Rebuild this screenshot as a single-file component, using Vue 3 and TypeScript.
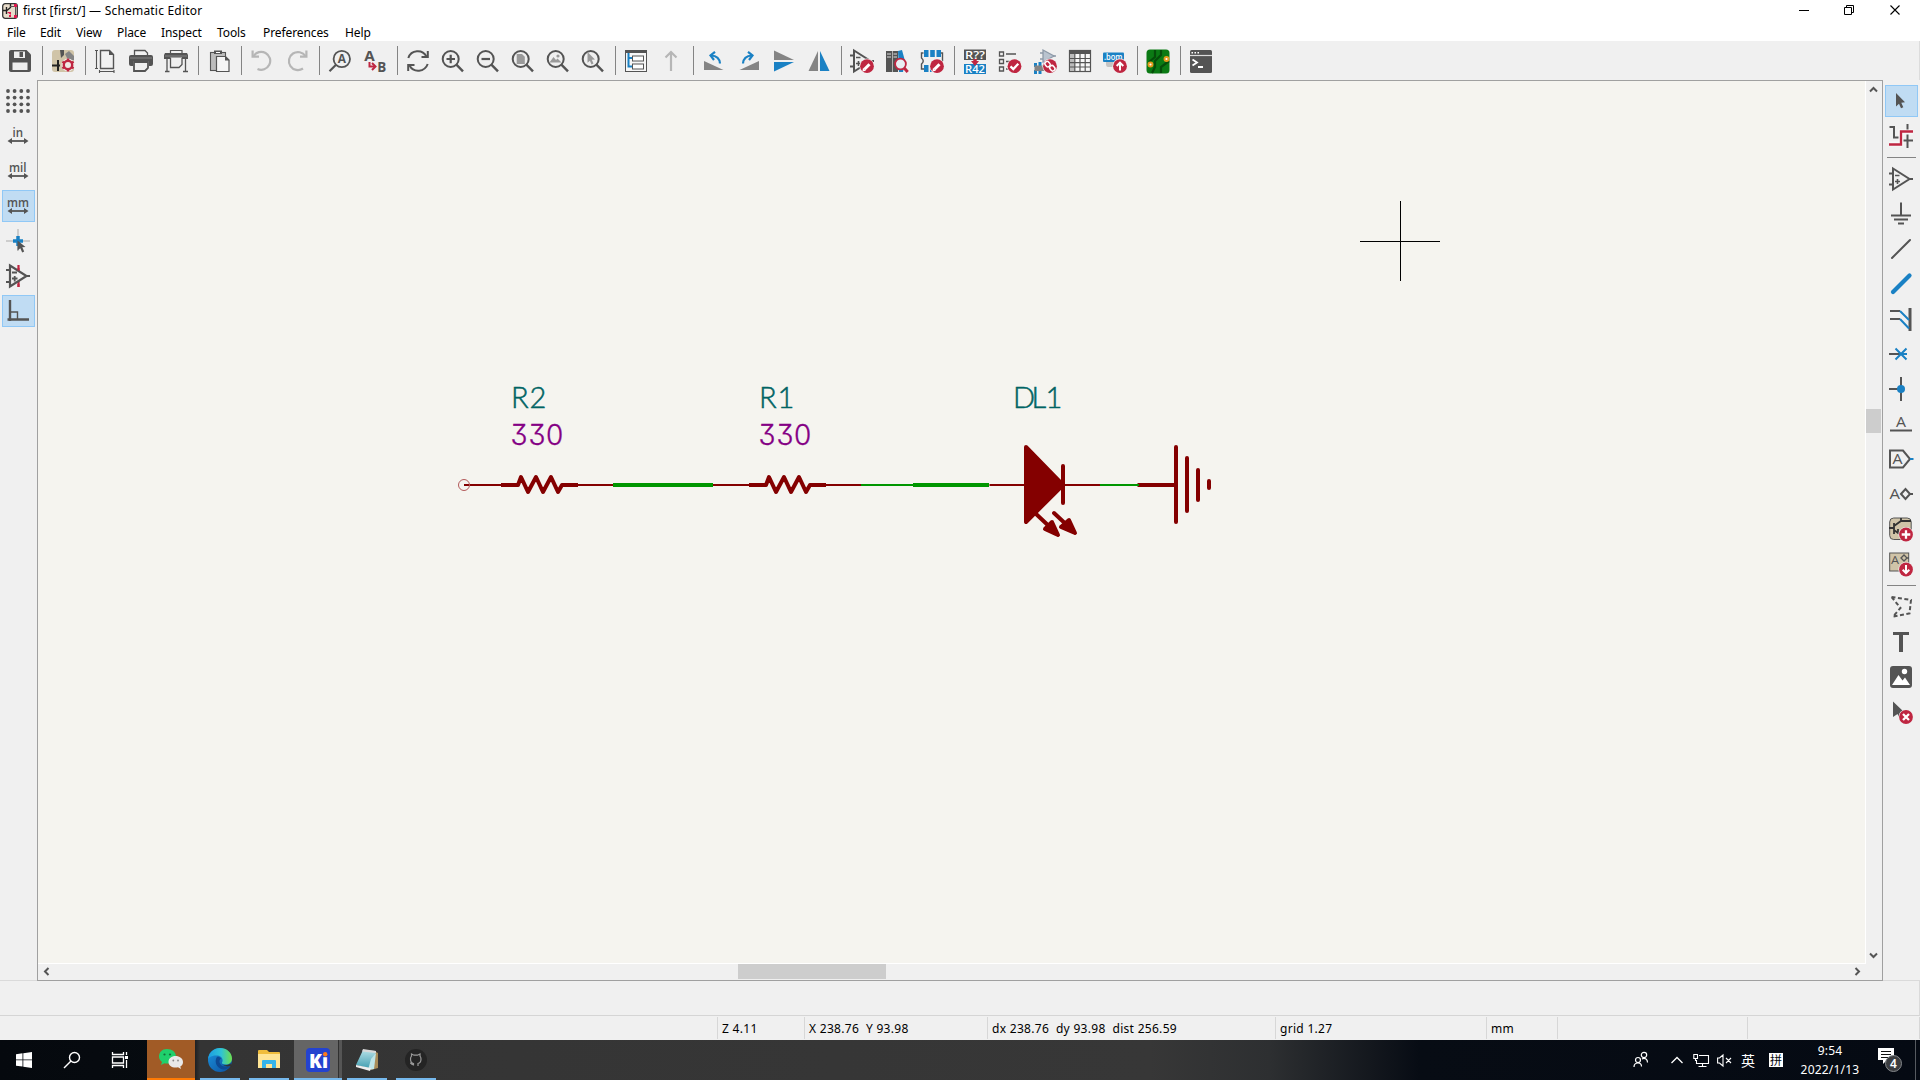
<script setup lang="ts">
interface Tool {
  icon: string
  active?: boolean
}
type Item = Tool | null

const D = '#545454'
const B = '#1a81c4'
const R = '#bf2641'
const G = '#848484'
const L = '#b6b6b6'
const T = '#d0c4a8'

const stroke = (d: string, color = D, w = 2, extra = '') =>
  `<path d="${d}" fill="none" stroke="${color}" stroke-width="${w}" ${extra}/>`
const fill = (d: string, color = D) => `<path d="${d}" fill="${color}"/>`
const label = (t: string, x: number, y: number, size: number, color = D, weight = 700, len = 0) =>
  `<text x="${x}" y="${y}" font-family="'Open Sans','Noto Sans',sans-serif" font-size="${size}" font-weight="${weight}" fill="${color}"${len ? ` textLength="${len}" lengthAdjust="spacingAndGlyphs"` : ''}>${t}</text>`
const badge = (cx: number, cy: number, inner: string) =>
  `<circle cx="${cx}" cy="${cy}" r="7.600" fill="#f0f0f0"/><circle cx="${cx}" cy="${cy}" r="6.900" fill="${R}"/>${inner}`

const lens = `<circle cx="9.700" cy="10" r="8" fill="none" stroke="${D}" stroke-width="2"/>` + stroke('M15.4 15.7L22 22.3', D, 2.4)
const pen = stroke('M14.500 20.300L19.500 15.300', '#fff', 3) + fill('M12.400 22.400L13 18.800L16 21.800Z', '#fff')
const opamp = stroke('M4 1.5V22.5L20.5 12Z', D, 2) + stroke('M0 6.5H4M0 17.500H4M20 12H24', D, 2) + stroke('M6 8.500H10.500M6 14.500H11M8.500 12V17', D, 1.6)
const measure = stroke('M4 17H20', D, 1.8) + fill('M1.500 17L6 14V20ZM22.500 17L18 14V20Z')

const icons: Record<string, string> = {
  save: fill('M1 3Q1 1 3 1H18.500L23 5.500V21Q23 23 21 23H3Q1 23 1 21Z') + fill('M6 2.500H17V9H6ZM4.500 13.500H19.500V21H4.500Z', '#f0f0f0') + fill('M11 3H15V8H11Z') + fill('M11.500 3H12V8H11.500Z', '#f0f0f0'),
  setup: `<rect x="1" y="1" width="22" height="22" rx="3" fill="${T}"/>` + fill('M9 1H13V6L10 9Z', '#545454') + fill('M14 5L18 2L23 7V11H17Z', G) + stroke('M1 16.500H9M7 11V22', '#222', 2) + `<circle cx="17" cy="16" r="6.500" fill="#efe9e4"/>` + `<circle cx="17" cy="16" r="4.200" fill="none" stroke="${R}" stroke-width="2.400"/>` + stroke('M17 9.500V12M17 20V22.500M11.400 12.800L13.500 14M20.500 18L22.600 19.200M22.600 12.800L20.500 14M13.500 18L11.400 19.200', R, 2.400),
  page: stroke('M6.500 1.500H15.500L19.500 5.500V19.500H6.500Z', D, 1.400) + fill('M15 1V6H20Z') + stroke('M2.500 1.500V19.500M1 1.500H4M1 19.500H4M5.500 22.500H20M5.500 21V24M20 21V24', D, 1.1),
  print: stroke('M5.500 6V1.500H16L18.500 4V6', D, 1.300) + fill('M2 6H22Q24 6 24 8V15Q24 17 22 17H20V12H4V17H2Q0 17 0 15V8Q0 6 2 6Z') + fill('M1 8.500H23V9.500H1Z', G) + stroke('M5 13V22H16L19 19V13Z', D, 1.800),
  plot: stroke('M6.500 4V1.500H18V4', D, 1.200) + fill('M1 4H23L24 6V10H0V6Z') + fill('M1 6.500H23V7.500H1Z', G) + `<rect x="6.500" y="8.500" width="11.500" height="10" fill="#f0f0f0"/>` + stroke('M6.500 9V18.500H15L18 15.500V9M3 10V22M21.500 10V22M1 22.500H5.500M19 22.500H24', D, 1.300),
  paste: `<rect x="3.500" y="3.500" width="15" height="18" fill="#bcbcbc" stroke="${D}" stroke-width="1.100"/>` + fill('M7 1.500H15V5H7Z') + fill('M9 3H13V4H9Z', '#fff') + `<path d="M9.500 7.500H18.500L22 11V22.500H9.500Z" fill="#f5f5f5" stroke="${D}" stroke-width="1.200"/>` + fill('M18 7V11.500H22.500Z'),
  undo: stroke('M2.600 1.500V7.700H9', L, 2.200) + stroke('M3.500 7.200A9 9 0 1 1 7.500 20', L, 2.200),
  redo: stroke('M21.400 1.500V7.700H15', L, 2.200) + stroke('M20.500 7.200A9 9 0 1 0 18 19.500', L, 2.200),
  find: `<circle cx="13.800" cy="10" r="8.200" fill="none" stroke="${D}" stroke-width="1.800"/>` + stroke('M8 15.800L1.500 22.300', D, 2.200) + label('A', 9.700, 14.200, 12, D, 700, 8.200),
  replace: label('A', 1.300, 12, 14.500, D, 700, 10.500) + label('B', 14.300, 23, 14, D, 700, 9) + stroke('M6.500 13V17.500H11', R, 2) + stroke('M9 14L12.500 17.500L9 21', R, 2),
  refresh: stroke('M2.300 9A10 10 0 0 1 20.500 7.500M21.700 15A10 10 0 0 1 3.500 16.500', D, 2) + stroke('M21.800 2V8H15.500M2.200 22V16H8.500', D, 2),
  zin: lens + stroke('M5.500 10H14M9.700 5.700V14.300', D, 2.200),
  zout: lens + stroke('M5.500 10H14', D, 2.200),
  zfit: lens + fill('M5.700 5H11L13.800 7.800V15H5.700Z', '#9a9a9a'),
  zobj: lens + fill('M3.500 13.500L7.500 8L10 11L11.500 9.500L15.500 13.500Z', '#9a9a9a') + `<circle cx="12" cy="7" r="1.600" fill="#9a9a9a"/>`,
  zsel: lens + fill('M6.500 3L14 10.500L10.800 10.800L12.500 14.600L10.500 15.500L8.900 11.700L6.500 13.800Z', '#9a9a9a'),
  nav: `<rect x="1.500" y="1.500" width="21" height="21" fill="#f7f7f7" stroke="${D}" stroke-width="1"/>` + fill('M1 1H23V4H1Z') + stroke('M4.500 4V17.500H8M4.500 9H8', B, 2) + `<rect x="8.500" y="7" width="11" height="5" fill="#fff" stroke="${D}"/><rect x="8.500" y="15" width="11" height="5" fill="#fff" stroke="${D}"/>`,
  up: stroke('M12 22V3M6.500 8.500L12 3L17.500 8.500', L, 2.200),
  ccw: fill('M2 12V21H21.500Z', G) + stroke('M18 14.500Q17.500 7 9 6.500', B, 2.200) + stroke('M13 2.800L8.500 6.500L12 11', B, 2.200),
  cw: fill('M22 12V21H2.500Z', G) + stroke('M6 14.500Q6.500 7 15 6.500', B, 2.200) + stroke('M11 2.800L15.500 6.500L12 11', B, 2.200),
  mirrorv: fill('M2 1.500V11H22Z', G) + fill('M2 13V22.500L22 13Z', B),
  mirrorh: fill('M11 2V22H1.500Z', G) + fill('M13 2V22H22.500Z', B),
  symedit: opamp + badge(17, 17.200, pen),
  symlib: fill('M1 2H7V23H1ZM7.600 2H13V23H7.600Z') + fill('M13 2L17 1L20 12L18 23H14Z', B) + stroke('M2 5H6M2 8H6M8.500 5H12M8.500 8H12', '#ddd', 1) + `<circle cx="15.500" cy="15" r="5.400" fill="#e8eef2" stroke="${R}" stroke-width="1.800"/>` + stroke('M19.200 19L22.700 23', R, 3),
  fpedit: stroke('M3.500 4H1.500V9Q5 12 1.500 15V20H4M20.500 4H22.500V12', D, 1.400) + fill('M4 1H8.500V8H4ZM10.200 1H14.800V8H10.200ZM16.500 1H21V8H16.500ZM4 16H8.500V23H4ZM10 16H14V23H10Z', B) + badge(17, 17.200, pen),
  annotate: fill('M1 0.500H23V11H1Z') + fill('M1 15H23V25H1Z', B) + label('R??', 2, 9.700, 10.500, '#fff', 600, 20) + label('R42', 2, 23.800, 10.500, '#fff', 600, 20) + fill('M10.300 10H13.700V12H16L12 17L8 12H10.300Z', R),
  erc: stroke('M1.500 3H5.500V7H1.500ZM1.500 10.500H5.500V14.500H1.500ZM1.500 18H5.500V22H1.500ZM8 5H18M8 12.500H13M8 20H11', D, 1.300) + badge(16.500, 17.200, stroke('M12.500 17.300L15.300 20L20.300 14.800', '#fff', 2.300)),
  assign: `<path d="M10 1V13L21 7Z" fill="#b9c3cf" stroke="#8d99a8" stroke-width="1.300"/>` + stroke('M7 4H10M7 10H10M20 7H23', '#8d99a8', 1.500) + fill('M1 14H4V18H1ZM5.500 13H8.500V18H5.500ZM10 13H13V18H10ZM1 21H4V25H1ZM5.500 21H8.500V25H5.500Z', B) + fill('M1.500 16.500H12V22H1.500Z', G) + badge(17, 17.200, `<g fill="none" stroke="#fff" stroke-width="1.500"><rect x="-2.200" y="-4.400" width="4.400" height="5.600" rx="2" transform="translate(15.600 16.400) rotate(-40)"/><rect x="-2.200" y="-1.200" width="4.400" height="5.600" rx="2" transform="translate(18.300 18) rotate(-40)"/></g>`),
  table: `<rect x="1.500" y="1.500" width="21" height="21" fill="#f7f7f7" stroke="${D}" stroke-width="1.200"/>` + fill('M1 1H23V5H1Z') + fill('M2 5H6.500V22H2Z', '#bbb') + stroke('M6.800 5V22M12 5V22M17.200 5V22M2 9.500H22M2 13.700H22M2 18H22', D, 1.200),
  bom: fill('M3 10H20V14H14L10 18H5Q3 18 3 15Z', '#c4c4c4') + `<rect x="0" y="3.500" width="21" height="9.500" rx="1" fill="${B}"/>` + label('.bom', 1, 11, 9, '#fff', 600, 18.500) + badge(17, 17.200, stroke('M17 21.500V14M13.700 17L17 13.600L20.300 17', '#fff', 2)),
  pcb: `<rect x="0.500" y="0.500" width="23" height="24" rx="3.500" fill="#0b7a14"/>` + stroke('M9 1V8L3 13M15 1V6L9 12V18L6 24M15 24V18L23 12', '#054d0a', 2.200) + `<circle cx="20.500" cy="10" r="2" fill="#fff" stroke="#e59a1c" stroke-width="1.900"/><circle cx="4.500" cy="15.500" r="2" fill="#fff" stroke="#e59a1c" stroke-width="1.900"/>`,
  console: `<rect x="1" y="1" width="22" height="23" rx="1.500" fill="${D}"/>` + stroke('M1 6.500H23', '#ddd', 1.200) + stroke('M2.500 3.700H11', '#fff', 1.500, 'stroke-dasharray="1.500 1.500"') + stroke('M3.500 10.500L8 13.500L3.500 16.500M9 18H14', '#fff', 1.800),

  grid: [2, 8.600, 15.300, 22].map(y => [2, 8.600, 15.300, 22].map(x => `<circle cx="${x}" cy="${y}" r="1.900" fill="${D}"/>`).join('')).join(''),
  inch: label('in', 6.500, 12.700, 12, D, 600, 10.500) + measure,
  mil: label('mil', 3, 12.700, 12, D, 600, 17.500) + measure,
  mm: label('mm', 1, 13, 12, D, 600, 22) + measure,
  cursor: stroke('M0 12H24M12 0V22', '#aaa', 1) + stroke('M7 12H17M12 7V17', B, 3.500) + fill('M11.500 11.500L19.500 18L16.300 18.300L18.200 22.500L16.200 23.500L14.300 19.300L11.500 21.500Z'),
  hidden: stroke('M12.500 1V23', R, 2.200) + `<path d="M4 1.500V22.500L20.500 12Z" fill="#f0f0f0" stroke="${D}" stroke-width="2.200"/>` + stroke('M0 6H4M0 18H4M20 12H24', D, 2.200) + stroke('M6 8.500H11M6 14.500H11.500M8.700 12V17.500', D, 1.800) + stroke('M12.500 6.500V4M12.500 20V23', R, 2),
  ortho: stroke('M4 1V22M1.500 20.500H23', D, 2.400) + stroke('M4 13H11.500V20', D, 1.400),

  select: fill('M7 4L16 13.300L12.300 13.700L14.300 18.300L12 19.300L10 14.700L7 17.500Z'),
  netlight: stroke('M0.500 3H5V13.500H10M18.500 0V24M12 16.500H24', D, 2) + stroke('M0 20H12V8H24', '#f7f7f7', 5) + stroke('M0 20.500H12V7.500H24', R, 2.300),
  symbol: opamp,
  power: stroke('M12 0.500V13M2 13.500H22M5 17.500H19M9 21.500H15', D, 2),
  wire: stroke('M3 21L21 3', D, 2, 'stroke-linecap="round"'),
  bus: stroke('M4 20L20.500 3.500', B, 4.200, 'stroke-linecap="round"'),
  entry: stroke('M1 4H11M1 12H11', D, 2) + stroke('M21 1V24', D, 3) + stroke('M11 4L20 13M11 12L20 21.500', B, 2),
  noconn: stroke('M0 12H11', D, 2) + stroke('M6.500 6.500L17.500 17.500M17.500 6.500L6.500 17.500M12 12H18', B, 2),
  junction: stroke('M12 0V24M0 12H12', D, 2) + `<circle cx="12" cy="12" r="4" fill="${B}"/>`,
  netlabel: label('A', 7, 15, 14.500, D, 500, 10) + stroke('M1 18.500H23', D, 2),
  global: stroke('M1 3.500H14L21 12L14 20.500H1Z', D, 2) + stroke('M21 12H24.500', B, 2) + label('A', 3.500, 17, 14, D, 500, 10),
  hier: label('A', 0.500, 17, 15, D, 500, 10.500) + stroke('M12 12L16.500 7L21 12L16.500 17ZM21 12H24', D, 2),
  sheet: `<rect x="0.700" y="1" width="21.500" height="21.500" rx="4" fill="${T}" stroke="${D}"/>` + stroke('M0 11H5M5 6V17M5 9L12 4H22M12 1V4M5 13L9 16V12', '#333', 1.800) + badge(17, 17.500, stroke('M12.700 17.500H21.300M17 13.200V21.800', '#fff', 2.300)),
  pinsheet: `<rect x="0.700" y="1" width="19" height="18" fill="${T}" stroke="${D}"/>` + label('A', 2, 11.500, 11, D, 500, 8) + stroke('M12 6L15 3L18 6L15 9ZM18 6H20', D, 1.300) + badge(17, 17.500, stroke('M17 13V20.500M13.700 17.700L17 21L20.300 17.700', '#fff', 2)),
  poly: stroke('M2.500 2L22 5L20.500 18.500L4 21.500L11.500 13Z', D, 2, 'stroke-dasharray="4 2.500"'),
  text: fill('M4 2H20V5H14V22H10V5H4Z'),
  image: `<rect x="1" y="1" width="22" height="22" rx="3" fill="${D}"/>` + fill('M3 20L9.500 10L13.500 15.500L16 12.500L21 20Z', '#fff') + `<circle cx="15.500" cy="6.500" r="2.700" fill="#fff"/>`,
  remove: fill('M4 1.500L15 12L11 12.500L13.500 18L11 19L8.500 14L4 17Z') + badge(17, 17, stroke('M14 14L20 20M20 14L14 20', '#fff', 2.300)),
}

const t = (icon: string, active = false): Tool => ({ icon, active })
const top: Item[] = [
  t('save'), null, t('setup'), null, t('page'), t('print'), t('plot'), null, t('paste'), null, t('undo'), t('redo'), null,
  t('find'), t('replace'), null, t('refresh'), t('zin'), t('zout'), t('zfit'), t('zobj'), t('zsel'), null, t('nav'), t('up'), null,
  t('ccw'), t('cw'), t('mirrorv'), t('mirrorh'), null, t('symedit'), t('symlib'), t('fpedit'), null,
  t('annotate'), t('erc'), t('assign'), t('table'), t('bom'), null, t('pcb'), null, t('console'),
]
const left: Item[] = [t('grid'), t('inch'), t('mil'), t('mm', true), t('cursor'), t('hidden'), t('ortho', true)]
const right: Item[] = [
  t('select', true), t('netlight'), null, t('symbol'), t('power'), t('wire'), t('bus'), t('entry'), t('noconn'), t('junction'),
  t('netlabel'), t('global'), t('hier'), t('sheet'), t('pinsheet'), null, t('poly'), t('text'), t('image'), t('remove'),
]

const menu = [
  { name: 'File', slot: 33 }, { name: 'Edit', slot: 36 }, { name: 'View', slot: 41 }, { name: 'Place', slot: 44 },
  { name: 'Inspect', slot: 56 }, { name: 'Tools', slot: 46 }, { name: 'Preferences', slot: 82 }, { name: 'Help', slot: 50 },
]
const status = [
  { text: '', w: 718 }, { text: 'Z 4.11', w: 87 }, { text: 'X 238.76  Y 93.98', w: 183 }, { text: 'dx 238.76  dy 93.98  dist 256.59', w: 288 },
  { text: 'grid 1.27', w: 211 }, { text: 'mm', w: 71 }, { text: '', w: 190 }, { text: '', w: 172 },
]
const resistors = [0, 248]
</script>

<template>
  <div class="window">
    <header class="title">
      <svg class="app-icon" width="16" height="16" viewBox="0 0 16 16">
        <rect x=".7" y=".7" width="14.600" height="14.600" rx="2.500" fill="#e8dccb" stroke="#333" stroke-width="1.300" />
        <path d="M1 7.500H4.500M4.500 4V11M5 7.500L8.500 4.500V1" fill="none" stroke="#222" stroke-width="1.400" />
        <path d="M8 3.500H15M13.500 3V13" stroke="#555" />
        <path d="M5 9L9 12V9ZM12 1H15V4H12ZM12 12H15V15H12ZM7 12H9V14H7Z" fill="#e0184e" />
      </svg>
      <span class="caption">first [first/] — Schematic Editor</span>
      <svg class="controls" width="138" height="22" viewBox="0 0 138 22" fill="none" stroke="#000">
        <path d="M17 10.500H27" />
        <path d="M62.500 7.500H69.500V14.500H62.500ZM64.500 7V5.500H71.500V12.500H70" />
        <path d="M108.500 5.500L117.500 14.500M117.500 5.500L108.500 14.500" stroke-width="1.100" />
      </svg>
    </header>
    <nav class="menu">
      <span v-for="m in menu" :key="m.name" :style="{ width: m.slot + 'px' }">{{ m.name }}</span>
    </nav>
    <div class="topbar">
      <template v-for="(it, i) in top" :key="i">
        <span v-if="it" class="btn"><svg width="24" height="24" viewBox="0 0 24 24" v-html="icons[it.icon]"></svg></span>
        <i v-else class="vsep"></i>
      </template>
    </div>
    <main class="work">
      <aside class="side">
        <span v-for="(it, i) in left" :key="i" class="slot">
          <span v-if="it" class="tool" :class="{ active: it.active }"><svg width="24" height="24" viewBox="0 0 24 24" v-html="icons[it.icon]"></svg></span>
        </span>
      </aside>
      <section class="pane">
        <svg class="sheet" width="1827" height="882" viewBox="38 81 1827 882">
          <g fill="none" stroke="#840000">
            <g v-for="dx in resistors" :key="dx" :transform="`translate(${dx} 0)`">
              <path d="M464 485H502M577 485H613" stroke-width="2" />
              <path d="M501 485H518L521 477L528 492L536 477L543 492L551 477L558 492L562 485H578" stroke-width="4" stroke-linejoin="round" />
            </g>
          </g>
          <path d="M613 485H713M913 485H989" stroke="#009600" stroke-width="4" />
          <path d="M861 485H913" stroke="#009600" stroke-width="2" />
          <circle cx="464" cy="485" r="5.500" fill="none" stroke="#b35a5a" />
          <g stroke="#840000" stroke-width="4" stroke-linecap="round" stroke-linejoin="round" fill="#840000">
            <path d="M989.500 485H1026M1063 485H1100" stroke-width="2" stroke-linecap="butt" />
            <path d="M1026 447L1063 485L1026 522Z" />
            <path d="M1063 466V503M1035 513L1052 529M1054 513L1070 528" fill="none" />
            <path d="M1058 535L1045 529L1052 522ZM1075 533L1061 527L1069 520Z" />
            <path d="M1137.500 485H1176" stroke-linecap="butt" />
            <path d="M1176 447V522M1187 458V511M1198 470V500M1209 481V488" />
          </g>
          <path d="M1100 485H1139" stroke="#009600" stroke-width="2" />
          <path d="M1400.500 201V281M1360 241.500H1440" stroke="#000" stroke-width="1" />
          <g class="ref">
            <text x="511 529.500" y="408">R2</text>
            <text x="759 777.500" y="408">R1</text>
            <text x="1013 1031.500 1045.500" y="408">DL1</text>
          </g>
          <g class="val">
            <text x="510.500 528.500 546" y="445">330</text>
            <text x="758.500 776.500 794" y="445">330</text>
          </g>
        </svg>
        <div class="vscroll">
          <svg width="15" height="15" viewBox="0 0 15 15"><path d="M4 10.500L7.500 7L11 10.500" /></svg>
          <i class="vthumb"></i>
          <svg width="15" height="15" viewBox="0 0 15 15"><path d="M4 4.500L7.500 8L11 4.500" /></svg>
        </div>
        <div class="hscroll">
          <svg width="15" height="15" viewBox="0 0 15 15"><path d="M10.500 4L7 7.500L10.500 11" /></svg>
          <i class="hthumb"></i>
          <svg width="15" height="15" viewBox="0 0 15 15"><path d="M4.500 4L8 7.500L4.500 11" /></svg>
        </div>
      </section>
      <aside class="side right">
        <template v-for="(it, i) in right" :key="i">
          <span v-if="it" class="slot"><span class="tool" :class="{ active: it.active }"><svg width="24" height="24" viewBox="0 0 24 24" v-html="icons[it.icon]"></svg></span></span>
          <i v-else class="hsep"></i>
        </template>
      </aside>
    </main>
    <div class="message"></div>
    <footer class="status">
      <span v-for="(s, i) in status" :key="i" :style="{ width: s.w + 'px' }">{{ s.text }}</span>
    </footer>
    <div class="taskbar">
      <span class="task sys">
        <svg width="16" height="16" viewBox="0 0 16 16" fill="#fff"><path d="M0 2.200L6.500 1.300V7.500H0ZM7.300 1.200L16 0V7.500H7.300ZM0 8.300H6.500V14.600L0 13.700ZM7.300 8.300H16V16L7.300 14.800Z" /></svg>
      </span>
      <span class="task sys">
        <svg width="18" height="18" viewBox="0 0 18 18" fill="none" stroke="#fff" stroke-width="1.400"><circle cx="11.500" cy="6.500" r="5" /><path d="M8 10L1 17" /></svg>
      </span>
      <span class="task sys last">
        <svg width="18" height="18" viewBox="0 0 18 18" fill="none" stroke="#fff" stroke-width="1.300"><path d="M1.500 1V3.500H12.500V1M1.500 17V14.500H12.500V17M1.500 6H12.500V12H1.500ZM15.500 1V4M15.500 9V17" /><path d="M14 5H17V8H14Z" fill="#fff" stroke="none" /></svg>
      </span>
      <span class="task wechat">
        <svg width="26" height="22" viewBox="0 0 26 22"><path d="M9 1C4 1 1 4.500 1 8.500C1 11 2.500 13 4 14L3 17L6.500 15.300C12 16.500 18 13.500 18 8.500C18 4 14 1 9 1Z" fill="#1fd06c" /><path d="M17.500 8C13.500 8 10.500 10.500 10.500 14C10.500 18 15 20.500 20 19.300L23 21L22.300 18.500C24 17.500 25 16 25 14C25 10.500 21.500 8 17.500 8Z" fill="#e9e9e9" /><g fill="#11713b"><circle cx="6.500" cy="6.500" r="1.100" /><circle cx="12" cy="6.500" r="1.100" /></g><g fill="#888"><circle cx="15.300" cy="12.500" r=".9" /><circle cx="20" cy="12.500" r=".9" /></g></svg>
      </span>
      <span class="task run">
        <svg width="24" height="24" viewBox="0 0 24 24">
          <defs>
            <linearGradient id="edgeTop"><stop offset="0" stop-color="#1b9de2" /><stop offset=".55" stop-color="#2fc3d6" /><stop offset="1" stop-color="#6fe04c" /></linearGradient>
            <linearGradient id="edgeLow" x1="0" y1="0" x2="1" y2="1"><stop offset="0" stop-color="#1b94de" /><stop offset="1" stop-color="#0c4f9e" /></linearGradient>
          </defs>
          <circle cx="12" cy="12" r="12" fill="url(#edgeLow)" />
          <path d="M0 11C1 4 6 0 12 0C19 0 24 5 24 10.500C24 14.500 21 16.500 18 16.500C15 16.500 13.500 15.500 14 14.500C15.500 12 14 8 9.500 7.500C5 7 1 9 0 11Z" fill="url(#edgeTop)" />
          <path d="M9 9C6 13 8 20 15 21.500C18 22 21 20 22.500 18C19 20 12 18.500 11.500 14C11.300 12 12.500 11 13 10.500C12 9 10 8.500 9 9Z" fill="#0d4a94" />
          <path d="M22.500 18C20 19 16.500 18.500 14.500 16.500C16 17.500 20 17.500 22.500 15.500L24 19Z" fill="#333" />
        </svg>
      </span>
      <span class="task run">
        <svg width="22" height="20" viewBox="0 0 22 20"><path d="M0 1Q0 0 1 0H9L11 2H21Q22 2 22 3V17H0Z" fill="#f0bd3c" /><path d="M0 4H22V18H0Z" fill="#ffe595" /><path d="M4 11Q4 10 5 10H17Q18 10 18 11V18H14V14H8V18H4Z" fill="#35b4ea" /></svg>
      </span>
      <span class="task run ki">
        <svg width="24" height="24" viewBox="0 0 24 24"><rect width="24" height="24" rx="4" fill="#2443cf" /><text x="3" y="19.500" font-family="'Open Sans',sans-serif" font-size="20" font-weight="800" fill="#fff" textLength="19" lengthAdjust="spacingAndGlyphs">Ki</text><rect x="16.500" y="3" width="6" height="6.200" fill="#2443cf" /><circle cx="19.200" cy="6.200" r="2.200" fill="#ff7a1a" /></svg>
      </span>
      <span class="task run">
        <svg width="24" height="24" viewBox="0 0 24 24"><defs><linearGradient id="note" x1="0" y1="0" x2="0" y2="1"><stop offset="0" stop-color="#b4e0e6" /><stop offset="1" stop-color="#3f9cb0" /></linearGradient></defs><path d="M19 3L23 5V20L16 22Z" fill="#a98c58" /><path d="M8 2L21 3L17 21L1 17Z" fill="url(#note)" /><path d="M8 1L21 3V5L7 3.500Z" fill="#d9d9d9" /><path d="M16 11L21 5L19 21L13 22Z" fill="#bfe5e8" /><path d="M1 17L16 20L15 23L1 19Z" fill="#eee" /></svg>
      </span>
      <span class="task run">
        <svg width="24" height="24" viewBox="0 0 24 24"><circle cx="12" cy="12" r="11" fill="#242424" /><path d="M9.500 17.500V15.500C6.500 15 6.500 12.500 6.500 11C6.500 9.500 7 8.700 7.500 8.200V6L10 7.200H13.500L16 6V8.200C16.800 9 17 10 17 11C17 13 16.500 15 14 15.500V18M9.500 16.500C7.500 17 7.500 15 6 15" fill="none" stroke="#999" stroke-width="1.200" /></svg>
      </span>
      <div class="tray">
        <svg class="people" width="16" height="18" viewBox="0 0 16 18" fill="none" stroke="#fff" stroke-width="1.200"><circle cx="11" cy="4" r="2.700" /><circle cx="5" cy="9" r="2.500" /><path d="M1 16Q1 12 5 12Q8.500 12 8.500 15.500M9 8Q11 6.800 13 8Q14.500 9 14.500 11.500" /></svg>
        <svg class="chev" width="12" height="18" viewBox="0 0 12 18" fill="none" stroke="#fff" stroke-width="1.300"><path d="M.5 12L6 6.500L11.500 12" /></svg>
        <svg class="net" width="17" height="18" viewBox="0 0 17 18" fill="none" stroke="#fff" stroke-width="1.100"><path d="M6 4.500H15.500V12.500H3.500V9M9.500 13V15.500M5.500 15.500H13.500M.8 3.500H4.500V7.500H.8ZM2.500 7V10" /></svg>
        <svg class="sound" width="15" height="18" viewBox="0 0 15 18" fill="none" stroke="#fff" stroke-width="1.100"><path d="M.6 7H2.500L6 4V15L2.500 12H.6ZM9 7L14 12M14 7L9 12" /></svg>
        <span class="ime">英</span>
        <span class="pin">拼</span>
        <span class="clock"><span>9:54</span><span>2022/1/13</span></span>
        <svg class="note" width="25" height="26" viewBox="0 0 25 26"><path d="M0 1H16V13H9L5 17V13H0Z" fill="#fff" /><path d="M3 4.500H13M3 7.500H13M3 10.500H10" stroke="#111" /><circle cx="15.500" cy="16.500" r="8" fill="#3b3d40" stroke="#85888c" /><text x="15.500" y="20.700" text-anchor="middle" font-family="'Noto Sans',sans-serif" font-size="12" font-weight="600" fill="#fff">4</text></svg>
        <i class="peek"></i>
      </div>
    </div>
  </div>
</template>

<style>
body { margin: 0; overflow: hidden; }
</style>

<style scoped>
.window { width: 1920px; height: 1080px; display: flex; flex-direction: column; background: #f0f0f0; font-family: "Noto Sans", "Open Sans", "Noto Sans CJK SC", sans-serif; font-size: 12px; color: #000; overflow: hidden; }
.window svg { display: block; flex: none; }
.btn svg, .tool svg { overflow: visible; }
.title { height: 22px; background: #fff; display: flex; align-items: center; padding-left: 2px; box-sizing: border-box; }
.caption { margin-left: 5px; font-size: 12px; line-height: 22px; letter-spacing: 0.2px; height: 22px; }
.controls { margin-left: auto; }
.menu { height: 19px; background: #fff; display: flex; padding-left: 7px; line-height: 21px; box-sizing: border-box; letter-spacing: -0.1px; }
.topbar { height: 39px; display: flex; align-items: center; padding-left: 2.500px; box-sizing: border-box; border-right: 1px solid #dcdcdc; }
.btn { width: 35px; height: 35px; display: flex; align-items: center; justify-content: center; }
.vsep { width: 1px; height: 29px; background: #848484; margin: 0 2.500px 0 4.500px; }
.work { height: 901px; display: flex; }
.side { width: 37px; display: flex; flex-direction: column; padding-top: 3px; box-sizing: border-box; flex: none; border-bottom: 1px solid #dadada; }
.slot { height: 35px; display: flex; align-items: center; padding-left: 2px; }
.tool { width: 33px; height: 32px; box-sizing: border-box; border: 1px solid transparent; display: flex; align-items: center; justify-content: center; }
.tool svg { margin-left: -1px; }
.tool.active { background: #c0dcf3; border-color: #90c8f6; }
.hsep { height: 1px; width: 29px; background: #848484; margin: 4px 0 3px 4px; }
.pane { width: 1846px; height: 901px; box-sizing: border-box; border: 1px solid #a0a0a0; display: grid; grid-template: 883px 16px / 1828px 16px; flex: none; background: #f0f0f0; }
.sheet { background: #f5f4ef; border-right: 1px solid #fff; border-bottom: 1px solid #fff; }
.vscroll { display: flex; flex-direction: column; height: 883px; }
.vscroll svg path, .hscroll svg path { fill: none; stroke: #555; stroke-width: 2; }
.vthumb { width: 15px; height: 24px; flex: none; background: #cdcdcd; margin: 313px 0 auto; }
.hscroll { display: flex; }
.hthumb { width: 148px; height: 15px; flex: none; background: #cdcdcd; margin: 0 auto 0 685px; }
.ref text { font-family: Lato, "Open Sans", sans-serif; font-weight: 300; font-size: 29px; fill: #006464; stroke: #006464; stroke-width: 0.500px; }
.val text { font-family: Inter, sans-serif; font-weight: 300; font-size: 28px; fill: #840084; stroke: #840084; stroke-width: 0.300px; font-feature-settings: "cv09" 1; }
.message { height: 35px; box-sizing: border-box; border-bottom: 1px solid #d5d5d5; border-right: 1px solid #dadada; }
.status { height: 24px; display: flex; padding-top: 1px; box-sizing: border-box; }
.status span { border-right: 1px solid #d7d7d7; box-sizing: border-box; padding-left: 4px; line-height: 23px; height: 22px; white-space: pre; letter-spacing: 0.300px; flex: none; }
.taskbar { height: 40px; display: flex; background: linear-gradient(90deg, #05090e 0, #070b10 190px, #343434 200px, #373737 1150px, #2d2f31 1270px, #070c14 1420px, #050a13 1920px); color: #fff; }
.task { width: 48px; height: 40px; margin-right: 1px; display: flex; align-items: center; justify-content: center; box-sizing: border-box; flex: none; }
.task.sys { margin-right: 0; }
.task.sys.last { margin-right: 3px; }
.wechat { background: #a15b26; border-bottom: 2px solid #ff7a05; }
.run { background: linear-gradient(#76b9ed, #76b9ed) 4px 38px / 40px 2px no-repeat; }
.ki { background: linear-gradient(#76b9ed, #76b9ed) 0 38px / 48px 2px no-repeat, linear-gradient(90deg, #656565 44px, #303030 44px, #303030 45px, #555 45px); }
.tray { margin-left: auto; display: flex; align-items: center; height: 40px; }
.people { margin-right: 22px; }
.chev { margin-right: 10px; }
.net { margin-right: 7px; }
.sound { margin-right: 9px; }
.ime { font: 14px/20px "Noto Sans CJK SC", sans-serif; width: 14px; margin-right: 14px; }
.pin { font: 12px/14px "Noto Sans CJK SC", sans-serif; width: 14px; height: 14px; background: #fff; color: #05090e; margin-right: 17px; text-align: center; }
.clock { display: flex; flex-direction: column; align-items: center; width: 60px; line-height: 19px; margin-right: 18px; letter-spacing: 0.200px; }
.note { margin-right: 12px; }
.peek { width: 1px; height: 40px; background: #565a60; margin-right: 4px; }
</style>
